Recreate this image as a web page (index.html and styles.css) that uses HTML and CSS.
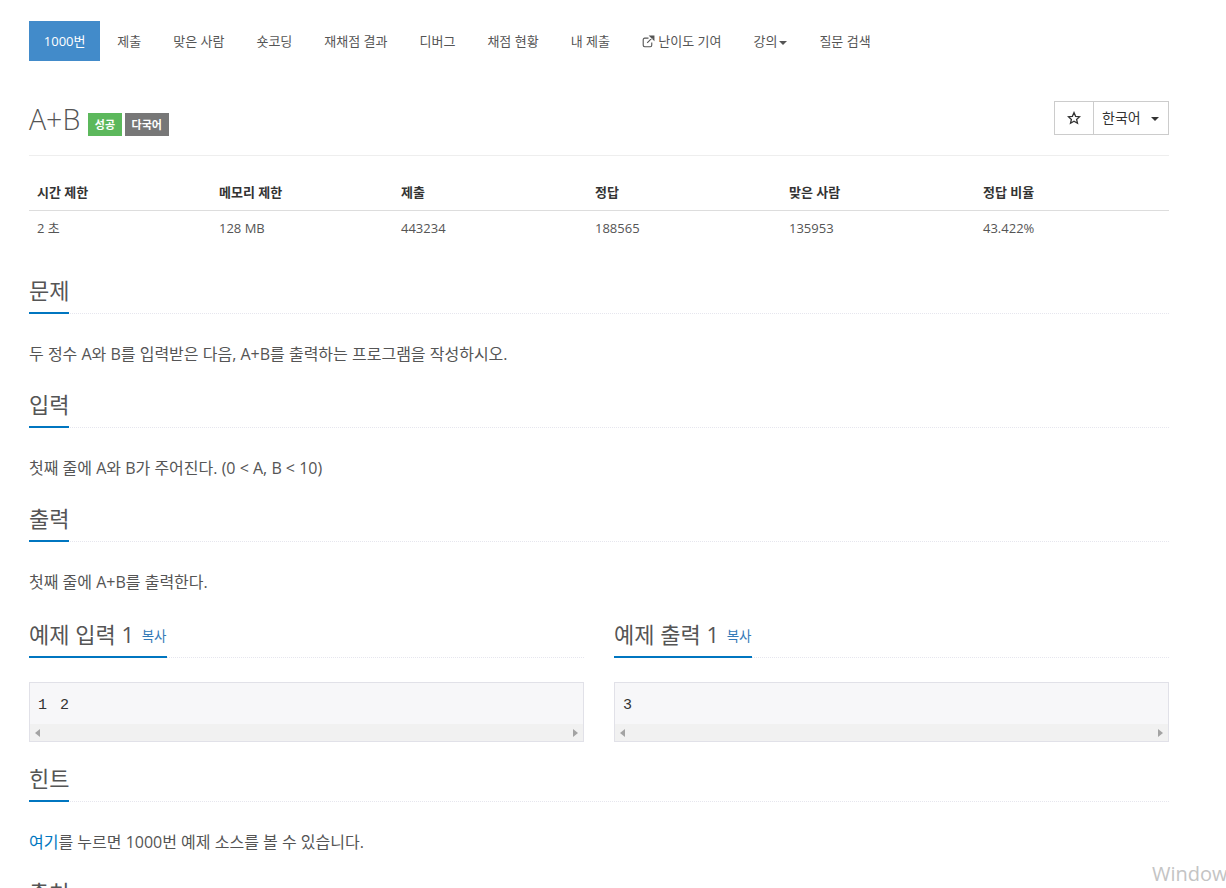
FILE: index.html
```html
<!DOCTYPE html>
<html lang="ko">
<head>
<meta charset="utf-8">
<title>A+B</title>
<link rel="stylesheet" href="styles.css">
</head>
<body>
<div class="container">
  <ul class="nav">
    <li class="active"><a href="#">1000번</a></li>
    <li><a href="#">제출</a></li>
    <li><a href="#">맞은 사람</a></li>
    <li><a href="#">숏코딩</a></li>
    <li><a href="#">재채점 결과</a></li>
    <li><a href="#">디버그</a></li>
    <li><a href="#">채점 현황</a></li>
    <li><a href="#">내 제출</a></li>
    <li><a href="#"><svg class="ext" viewBox="0 0 14 14" width="13" height="13"><path d="M10.5 8v3a1.6 1.6 0 0 1-1.6 1.6H2.9A1.6 1.6 0 0 1 1.3 11V5a1.6 1.6 0 0 1 1.6-1.6H7" fill="none" stroke="#555" stroke-width="1.2"/><path d="M5.6 8.4 12 2M8.6 1.2h4.2v4.2z" fill="#555" stroke="#555" stroke-width="1.2"/></svg> 난이도 기여</a></li>
    <li><a href="#">강의<span class="caret"></span></a></li>
    <li><a href="#">질문 검색</a></li>
  </ul>

  <div class="title-row">
    <h1 class="title"><span>A+B</span><span class="label green">성공</span><span class="label gray">다국어</span></h1>
    <div class="btn-group">
      <button class="btn star"><svg viewBox="0 0 14 14" width="14" height="14"><path d="M7 1.6 8.6 5.3l4 .4-3 2.7.9 3.9L7 10.3l-3.500 2 .9-3.900-3-2.700 4-.4z" fill="none" stroke="#333" stroke-width="1.300"/></svg></button>
      <button class="btn lang">한국어<span class="caret lang-caret"></span></button>
    </div>
  </div>

  <table class="info">
    <thead>
      <tr><th class="c1">시간 제한</th><th class="c1">메모리 제한</th><th class="c2">제출</th><th class="c2">정답</th><th class="c2">맞은 사람</th><th>정답 비율</th></tr>
    </thead>
    <tbody>
      <tr><td>2 초</td><td>128 MB</td><td>443234</td><td>188565</td><td>135953</td><td>43.422%</td></tr>
    </tbody>
  </table>

  <section class="sec">
    <div class="headline"><h2>문제</h2></div>
    <p>두 정수 A와 B를 입력받은 다음, A+B를 출력하는 프로그램을 작성하시오.</p>
  </section>
  <section class="sec">
    <div class="headline"><h2>입력</h2></div>
    <p>첫째 줄에 A와 B가 주어진다. (0 &lt; A, B &lt; 10)</p>
  </section>
  <section class="sec">
    <div class="headline"><h2>출력</h2></div>
    <p>첫째 줄에 A+B를 출력한다.</p>
  </section>

  <div class="samples">
    <div class="sample">
      <div class="headline"><h2>예제 입력 1 <a class="copy" href="#">복사</a></h2></div>
      <div class="pre"><pre>1 2</pre><div class="sbar"><i class="arr left"></i><i class="arr right"></i></div></div>
    </div>
    <div class="sample">
      <div class="headline"><h2>예제 출력 1 <a class="copy" href="#">복사</a></h2></div>
      <div class="pre"><pre>3</pre><div class="sbar"><i class="arr left"></i><i class="arr right"></i></div></div>
    </div>
  </div>

  <section class="sec hint">
    <div class="headline"><h2>힌트</h2></div>
    <p><a href="#">여기</a>를 누르면 1000번 예제 소스를 볼 수 있습니다.</p>
  </section>
  <section class="sec">
    <div class="headline"><h2>출처</h2></div>
  </section>
</div>
<div class="watermark">Windows</div>
</body>
</html>
```

FILE: styles.css
```css
* { box-sizing: border-box; }
html, body { margin: 0; height: 888px; overflow: hidden; background: #fff; }
body {
  font-family: "Open Sans", "Noto Sans CJK KR", sans-serif;
  font-size: 14px;
  line-height: 20px;
  color: #555;
}
a { text-decoration: none; color: #0076c0; }
.container { width: 1140px; margin-left: 29px; padding-top: 21px; }

.nav { display: flex; gap: 2px; margin: 0; padding: 0; list-style: none; height: 40px; font-size: 13px; }
.nav a { display: block; padding: 10px 15px; color: #555; white-space: nowrap; }
.nav .active a { background: #428bca; color: #fff; padding: 10px 14.8px; }
.ext { vertical-align: -2px; }
.caret { display: inline-block; width: 0; height: 0; margin-left: 2px; vertical-align: middle; border-top: 4px solid #555; border-left: 4px solid transparent; border-right: 4px solid transparent; }

.title-row { display: flex; justify-content: space-between; align-items: flex-start; margin-top: 40px; height: 55px; border-bottom: 1px solid #eee; }
.title { margin: 0; font-size: 28.5px; line-height: 37px; font-weight: 300; color: #555; display: flex; align-items: flex-end; }
.label { display: block; height: 23px; margin-bottom: 2px; padding: 0 6.5px; font-size: 11px; line-height: 23px; font-weight: 700; color: #fff; }
.title .green { background: #5cb85c; margin-left: 8px; }
.title .gray { background: #777; margin-left: 3px; padding: 0 7px; }
.btn-group { display: flex; height: 34px; }
.btn { height: 34px; padding: 0; margin: 0; background: #fff; border: 1px solid #ccc; color: #333; font: inherit; font-size: 14px; }
.star { width: 39px; border-right: 0; display: flex; align-items: center; justify-content: center; }
.lang { width: 76px; text-align: left; padding-left: 8px; }
.lang-caret { margin-left: 10px; border-top-color: #333; }

.info { width: 100%; margin-top: 22px; border-collapse: collapse; font-size: 13px; line-height: 18px; }
.info th { text-align: left; height: 32px; padding: 0 8px 3px; color: #333; font-weight: 700; border-bottom: 1px solid #ddd; }
.info td { height: 36px; padding: 0 8px; color: #555; }
.c1 { width: 182px; }
.c2 { width: 194px; }

.sec { margin-top: 26px; }
.info + .sec { margin-top: 30px; }
.headline { border-bottom: 1px dotted #e6e6ee; height: 38px; }
.headline h2 { display: inline-block; margin: 0; height: 38px; font-size: 22px; line-height: 28px; font-weight: 400; color: #555; border-bottom: 2px solid #0076c0; }
.sec p { margin: 30px 0 0; height: 20px; line-height: 20px; font-size: 16px; }

.samples { display: flex; gap: 30px; margin-top: 28px; }
.sample { flex: 1; }
.copy { position: relative; top: -2px; font-size: 13.5px; margin-left: 2px; color: #337ab7; }
.pre { margin-top: 24px; height: 60px; border: 1px solid #e1e1e8; background: #f7f7f9; }
.pre pre { margin: 0; height: 41px; padding: 13px 8px 0; font-family: "Liberation Mono", monospace; font-size: 15px; line-height: 20px; color: #333; word-spacing: 4px; }
.sbar { display: flex; justify-content: space-between; align-items: center; height: 17px; padding: 0 5px; background: #f1f1f1; }
.arr { width: 0; height: 0; border-top: 4px solid transparent; border-bottom: 4px solid transparent; }
.left { border-right: 5px solid #a3a3a3; }
.right { border-left: 5px solid #a3a3a3; }
.hint { margin-top: 22px; }

.watermark { position: absolute; left: 1152px; top: 860px; font-size: 20px; line-height: 27px; color: #c4c4c4; white-space: nowrap; font-family: "Open Sans", sans-serif; }
```
